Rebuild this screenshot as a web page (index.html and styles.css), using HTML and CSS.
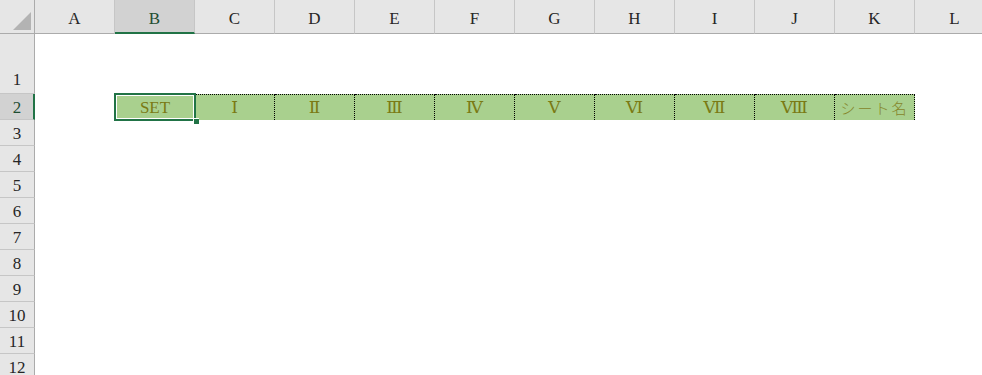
FILE: index.html
```html
<!DOCTYPE html>
<html>
<head>
    <title>シート</title>
    <link rel="stylesheet" href="styles.css">
</head>
<body>

    <div class="sheet">

        <!-- Encabezado de columnas -->
        <div class="row head-row">
            <div class="corner"><span class="tri"></span></div>
            <div class="colhead">A</div>
            <div class="colhead sel">B</div>
            <div class="colhead">C</div>
            <div class="colhead">D</div>
            <div class="colhead">E</div>
            <div class="colhead">F</div>
            <div class="colhead">G</div>
            <div class="colhead">H</div>
            <div class="colhead">I</div>
            <div class="colhead">J</div>
            <div class="colhead">K</div>
            <div class="colhead">L</div>
        </div>

        <div class="row tall"><div class="rowhead">1</div></div>

        <div class="row">
            <div class="rowhead sel">2</div>
            <div class="cell"></div>
            <div class="cell green active">SET</div>
            <div class="cell green ants">Ⅰ</div>
            <div class="cell green ants">Ⅱ</div>
            <div class="cell green ants">Ⅲ</div>
            <div class="cell green ants">Ⅳ</div>
            <div class="cell green ants">Ⅴ</div>
            <div class="cell green ants">Ⅵ</div>
            <div class="cell green ants">Ⅶ</div>
            <div class="cell green ants">Ⅷ</div>
            <div class="cell green ants jp">シート名</div>
        </div>

        <div class="row"><div class="rowhead">3</div></div>
        <div class="row"><div class="rowhead">4</div></div>
        <div class="row"><div class="rowhead">5</div></div>
        <div class="row"><div class="rowhead">6</div></div>
        <div class="row"><div class="rowhead">7</div></div>
        <div class="row"><div class="rowhead">8</div></div>
        <div class="row"><div class="rowhead">9</div></div>
        <div class="row"><div class="rowhead">10</div></div>
        <div class="row"><div class="rowhead">11</div></div>
        <div class="row"><div class="rowhead">12</div></div>
    </div>

</body>
</html>
```

FILE: styles.css
```css
/* Hoja de cálculo */
body {
    margin: 0;
    background: #fff;
    font-family: "Liberation Serif", "DejaVu Serif", "Noto Sans CJK JP", serif;
    font-size: 17px;
    color: #333;
    overflow: hidden;
}

.sheet {
    width: 994px;
}

.row {
    display: flex;
    height: 26px;
}

.row.tall {
    height: 60px;
}

.row.head-row {
    height: 34px;
}

/* Encabezados */
.corner {
    width: 35px;
    flex: none;
    box-sizing: border-box;
    background: #e6e6e6;
    border-right: 1px solid #ababab;
    border-bottom: 1px solid #ababab;
    position: relative;
}

.tri {
    position: absolute;
    right: 3px;
    bottom: 3px;
    width: 0;
    height: 0;
    border-left: 18px solid transparent;
    border-bottom: 18px solid #b3b3b3;
}

.colhead {
    width: 80px;
    flex: none;
    box-sizing: border-box;
    background: #e6e6e6;
    border-right: 1px solid #c6c6c6;
    border-bottom: 1px solid #ababab;
    display: flex;
    align-items: center;
    justify-content: center;
    padding-top: 5px;
    color: #262626;
}

.colhead.sel {
    background: #d2d2d2;
    border-bottom: 2px solid #217346;
    padding-top: 6px;
    color: #1f4e33;
}

.rowhead {
    width: 35px;
    flex: none;
    box-sizing: border-box;
    background: #e6e6e6;
    border-right: 1px solid #ababab;
    border-bottom: 1px solid #c6c6c6;
    display: flex;
    align-items: center;
    justify-content: center;
    padding-top: 2px;
    color: #262626;
}

.tall .rowhead {
    align-items: flex-end;
    padding-bottom: 3px;
}

.rowhead.sel {
    background: #d2d2d2;
    border-right: 2px solid #217346;
    color: #1f4e33;
    padding-left: 1px;
}

/* Celdas */
.cell {
    width: 80px;
    flex: none;
    box-sizing: border-box;
    display: flex;
    align-items: center;
    justify-content: center;
    padding-top: 1px;
}

.cell:first-of-type {
    width: 79px;
}

.cell.green {
    background: #a9d08e;
    color: #7a7a14;
}

.cell.ants {
    border-top: 1px dotted #000;
    border-right: 1px dotted #000;
    padding-top: 0;
}

.cell.jp {
    font-size: 15px;
    font-weight: 300;
    letter-spacing: 2px;
    color: #85852a;
}

/* Celda activa */
.cell.active {
    position: relative;
}

.cell.active::after {
    content: "";
    position: absolute;
    left: -1px;
    top: -1px;
    right: -1px;
    bottom: -1px;
    border: 2px solid #217346;
    box-shadow: inset 0 0 0 1px #fff;
}

.cell.active::before {
    content: "";
    position: absolute;
    right: -4px;
    bottom: -4px;
    width: 5px;
    height: 5px;
    background: #217346;
    border-left: 1px solid #fff;
    border-top: 1px solid #fff;
    z-index: 2;
}
```
